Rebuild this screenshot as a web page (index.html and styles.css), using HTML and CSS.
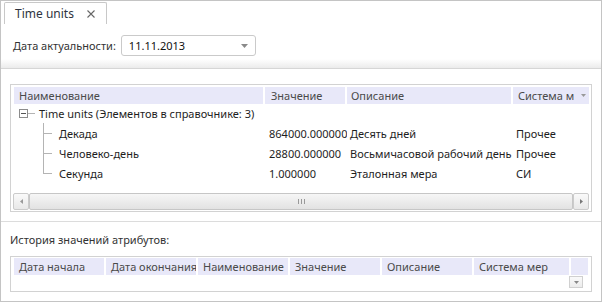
FILE: index.html
```html
<!DOCTYPE html>
<html lang="ru">
<head>
    <meta charset="UTF-8">
    <title>Time units</title>
    <link rel="stylesheet" href="styles.css">
</head>
<body>
    <div class="window">
        <div class="tabs">
            <div class="tab">
                <span>Time units</span>
                <svg class="tab-close" width="8" height="8" viewBox="0 0 8 8"><path d="M0.5 0.5 7.5 7.5M7.5 0.5 0.5 7.5" stroke="#666" stroke-width="1.1"/></svg>
            </div>
        </div>

        <div class="toolbar">
            <label class="field-label">Дата актуальности:</label>
            <div class="combo">
                <span>11.11.2013</span>
                <svg width="7" height="4" viewBox="0 0 7 4"><path d="M0 0h7L3.5 4z" fill="#8a8a8a"/></svg>
            </div>
        </div>

        <div class="main-panel">
            <div class="grid">
                <div class="ghead">
                    <div class="hcell c1">Наименование</div>
                    <div class="hcell c2">Значение</div>
                    <div class="hcell c3">Описание</div>
                    <div class="hcell c4">Система м</div>
                    <div class="hcell c5">
                        <svg width="5" height="3" viewBox="0 0 5 3"><path d="M0 0h5L2.5 3z" fill="#999"/></svg>
                    </div>
                </div>
                <div class="gbody">
                    <div class="row group-row">
                        <span class="toggle"></span>
                        <span class="stub"></span>
                        <span>Time units (Элементов в справочнике: 3)</span>
                    </div>
                    <div class="row">
                        <div class="cell c1 child"><span class="branch"></span>Декада</div>
                        <div class="cell c2">864000.000000</div>
                        <div class="cell c3">Десять дней</div>
                        <div class="cell c4">Прочее</div>
                    </div>
                    <div class="row">
                        <div class="cell c1 child"><span class="branch"></span>Человеко-день</div>
                        <div class="cell c2">28800.000000</div>
                        <div class="cell c3">Восьмичасовой рабочий день</div>
                        <div class="cell c4">Прочее</div>
                    </div>
                    <div class="row">
                        <div class="cell c1 child"><span class="branch last"></span>Секунда</div>
                        <div class="cell c2">1.000000</div>
                        <div class="cell c3">Эталонная мера</div>
                        <div class="cell c4">СИ</div>
                    </div>
                </div>
                <div class="hscroll">
                    <div class="sbtn">
                        <svg width="3" height="5" viewBox="0 0 3 5"><path d="M3 0v5L0 2.5z" fill="#999"/></svg>
                    </div>
                    <div class="thumb"><span class="grip"></span></div>
                    <div class="sbtn">
                        <svg width="3" height="5" viewBox="0 0 3 5"><path d="M0 0v5L3 2.5z" fill="#777"/></svg>
                    </div>
                </div>
            </div>
        </div>

        <div class="history-panel">
            <div class="field-label history-title">История значений атрибутов:</div>
            <div class="grid grid-history">
                <div class="ghead">
                    <div class="hcell h">Дата начала</div>
                    <div class="hcell h">Дата окончания</div>
                    <div class="hcell h">Наименование</div>
                    <div class="hcell h">Значение</div>
                    <div class="hcell h">Описание</div>
                    <div class="hcell h wide">Система мер</div>
                    <div class="hcell h extra"></div>
                </div>
                <div class="vscroll">
                    <div class="vbtn">
                        <svg width="5" height="3" viewBox="0 0 5 3"><path d="M0 0h5L2.5 3z" fill="#888"/></svg>
                    </div>
                </div>
            </div>
        </div>
    </div>
</body>
</html>
```

FILE: styles.css
```css
body {
    margin: 0;
    font-family: "Noto Sans", "DejaVu Sans", sans-serif;
    font-size: 11px;
    color: #1e1e1e;
}
.window {
    width: 600px;
    height: 300px;
    border: 1px solid #c4c4c4;
    display: flex;
    flex-direction: column;
    background: #fff;
}

/* tab strip */
.tabs {
    flex: none;
    height: 23px;
    padding-left: 3px;
    display: flex;
    align-items: flex-end;
}
.tab {
    height: 22px;
    width: 103px;
    box-sizing: border-box;
    border: 1px solid #c8c8c8;
    border-bottom: none;
    border-radius: 2px 2px 0 0;
    padding-left: 10px;
    display: flex;
    align-items: center;
    font-size: 12px;
    color: #2e3440;
}
.tab-close {
    margin-left: auto;
    margin-right: 11px;
}

/* date filter */
.toolbar {
    flex: none;
    height: 45px;
    padding: 11px 11px 0;
    box-sizing: border-box;
    border-bottom: 1px solid #d6d6d6;
    background: linear-gradient(#fff 35px, #e9e9e9 45px);
    display: flex;
    align-items: flex-start;
}
.toolbar .field-label {
    height: 21px;
    line-height: 21px;
    margin-left: 1px;
    margin-right: 5px;
}
.field-label {
    color: #333;
}
.combo {
    width: 135px;
    height: 21px;
    box-sizing: border-box;
    border: 1px solid #cacaca;
    border-radius: 3px;
    background: #fff;
    padding: 0 7px;
    display: flex;
    align-items: center;
    justify-content: space-between;
    color: #111;
}

/* grids */
.main-panel {
    flex: none;
    height: 153px;
    box-sizing: border-box;
    padding: 15px 9px 9px;
    border-bottom: 1px solid #dcdcdc;
}
.grid {
    height: 100%;
    box-sizing: border-box;
    border: 1px solid #d2d2d2;
    padding: 2px 2px 1px;
    display: flex;
    flex-direction: column;
}
.ghead {
    flex: none;
    height: 17px;
    margin-left: 1px;
    display: flex;
}
.hcell {
    background: #e8e8f9;
    color: #4a4a4a;
    padding-left: 5px;
    box-sizing: border-box;
    line-height: 17px;
    white-space: nowrap;
    overflow: hidden;
}
.ghead .c1 { width: 249px; margin-right: 2px; }
.ghead .c2 { width: 80px; margin-right: 2px; padding-left: 6px; }
.ghead .c3 { width: 164px; margin-right: 2px; padding-left: 4px; }
.ghead .c4 { width: 64px; }
.ghead .c5 {
    width: 12px;
    padding: 0 0 0 4px;
    display: flex;
    align-items: center;
}

.gbody {
    flex: 1;
    margin-left: 1px;
}
.row {
    height: 20px;
    display: flex;
    align-items: center;
    white-space: nowrap;
}
.row.group-row {
    height: 19px;
    padding-left: 5px;
}
.cell {
    box-sizing: border-box;
    overflow: hidden;
}
.row .c1 { width: 251px; }
.row .c2 { width: 82px; padding-left: 4px; }
.row .c3 { width: 166px; padding-left: 3px; }
.row .c4 { width: 64px; padding-left: 3px; }
.child {
    padding-left: 29px;
    display: flex;
    align-items: center;
    height: 20px;
}

/* tree lines */
.toggle {
    width: 9px;
    height: 9px;
    box-sizing: border-box;
    border: 1px solid #8c8c8c;
    background: linear-gradient(#555, #555) center / 5px 1px no-repeat;
}
.stub {
    width: 7px;
    height: 1px;
    background: #b4b4b4;
    margin-right: 4px;
}
.branch {
    width: 16px;
    height: 20px;
    background:
        linear-gradient(#b4b4b4, #b4b4b4) 0 0 / 1px 100% no-repeat,
        linear-gradient(#b4b4b4, #b4b4b4) 0 10px / 9px 1px no-repeat;
}
.branch.last {
    background:
        linear-gradient(#b4b4b4, #b4b4b4) 0 0 / 1px 11px no-repeat,
        linear-gradient(#b4b4b4, #b4b4b4) 0 10px / 9px 1px no-repeat;
}

/* scrollbars */
.hscroll {
    flex: none;
    height: 17px;
    display: flex;
}
.sbtn {
    width: 16px;
    box-sizing: border-box;
    border: 1px solid #cbcbcb;
    border-radius: 2px;
    background: linear-gradient(#fafafa, #e8e8e8);
    display: flex;
    align-items: center;
    justify-content: center;
}
.thumb {
    flex: 1;
    border: 1px solid #c6c6c6;
    border-radius: 2px;
    background: linear-gradient(#f6f6f6, #e2e2e2);
    display: flex;
    align-items: center;
    justify-content: center;
}
.grip {
    width: 7px;
    height: 5px;
    background:
        linear-gradient(#999, #999) 0 0 / 1px 100% no-repeat,
        linear-gradient(#999, #999) 3px 0 / 1px 100% no-repeat,
        linear-gradient(#999, #999) 6px 0 / 1px 100% no-repeat;
}

/* attribute history */
.history-panel {
    flex: 1;
    padding: 11px 9px 9px;
    display: flex;
    flex-direction: column;
}
.history-title {
    line-height: 14px;
    margin-bottom: 9px;
}
.grid-history {
    flex: 1;
    padding: 1px 2px 2px;
}
.hcell.h { width: 90px; margin-right: 2px; }
.hcell.wide { width: 95px; }
.hcell.extra { width: 17px; margin-right: 0; }
.vscroll {
    display: flex;
    justify-content: flex-end;
    padding: 1px 6px 0 0;
}
.vbtn {
    width: 14px;
    height: 12px;
    box-sizing: border-box;
    border: 1px solid #d0d0d0;
    background: linear-gradient(#fafafa, #ececec);
    display: flex;
    align-items: center;
    justify-content: center;
}
```
